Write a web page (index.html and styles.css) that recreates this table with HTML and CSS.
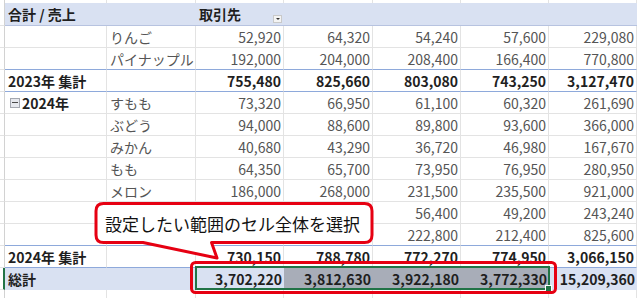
FILE: index.html
```html
<!DOCTYPE html>
<html lang="ja">
<head>
<meta charset="utf-8">
<title>ピボットテーブル</title>
<link rel="stylesheet" href="styles.css">
</head>
<body>
<div class="sheet">
  <div class="row top"><div class="rh"></div><div></div><div></div><div></div><div></div><div></div><div></div><div></div></div>
  <div class="row head">
    <div class="rh"></div>
    <div>合計 / 売上</div>
    <div></div>
    <div class="hcell">取引先<span class="filter"></span></div>
    <div></div><div></div><div></div><div></div>
  </div>
  <div class="row"><div class="rh"></div><div></div><div>りんご</div><div class="n">52,920</div><div class="n">64,320</div><div class="n">54,240</div><div class="n">57,600</div><div class="n">229,080</div></div>
  <div class="row blue"><div class="rh"></div><div></div><div>パイナップル</div><div class="n">192,000</div><div class="n">204,000</div><div class="n">208,400</div><div class="n">166,400</div><div class="n">770,800</div></div>
  <div class="row blue bold"><div class="rh"></div><div>2023年 集計</div><div></div><div class="n">755,480</div><div class="n">825,660</div><div class="n">803,080</div><div class="n">743,250</div><div class="n">3,127,470</div></div>
  <div class="row"><div class="rh"></div><div class="grp"><span class="collapse"></span>2024年</div><div>すもも</div><div class="n">73,320</div><div class="n">66,950</div><div class="n">61,100</div><div class="n">60,320</div><div class="n">261,690</div></div>
  <div class="row"><div class="rh"></div><div></div><div>ぶどう</div><div class="n">94,000</div><div class="n">88,600</div><div class="n">89,800</div><div class="n">93,600</div><div class="n">366,000</div></div>
  <div class="row"><div class="rh"></div><div></div><div>みかん</div><div class="n">40,680</div><div class="n">43,290</div><div class="n">36,720</div><div class="n">46,980</div><div class="n">167,670</div></div>
  <div class="row"><div class="rh"></div><div></div><div>もも</div><div class="n">64,350</div><div class="n">65,700</div><div class="n">73,950</div><div class="n">76,950</div><div class="n">280,950</div></div>
  <div class="row"><div class="rh"></div><div></div><div>メロン</div><div class="n">186,000</div><div class="n">268,000</div><div class="n">231,500</div><div class="n">235,500</div><div class="n">921,000</div></div>
  <div class="row"><div class="rh"></div><div></div><div></div><div class="n"></div><div class="n"></div><div class="n">56,400</div><div class="n">49,200</div><div class="n">243,240</div></div>
  <div class="row blue"><div class="rh"></div><div></div><div></div><div class="n"></div><div class="n"></div><div class="n">222,800</div><div class="n">212,400</div><div class="n">825,600</div></div>
  <div class="row blue bold"><div class="rh"></div><div>2024年 集計</div><div></div><div class="n">730,150</div><div class="n">788,780</div><div class="n">772,270</div><div class="n">774,950</div><div class="n">3,066,150</div></div>
  <div class="row total"><div class="rh"></div><div>総計</div><div></div><div class="n">3,702,220</div><div class="n sel">3,812,630</div><div class="n sel">3,922,180</div><div class="n sel">3,772,330</div><div class="n">15,209,360</div></div>
  <div class="row bottom"><div class="rh"></div><div></div><div></div><div></div><div></div><div></div><div></div><div></div></div>
</div>

<div class="selection"><span class="handle"></span></div>

<svg class="overlay" width="640" height="298" viewBox="0 0 640 298" aria-hidden="true">
  <rect x="191.5" y="262.5" width="364" height="30" rx="4" ry="4" fill="none" stroke="#e60012" stroke-width="3"/>
  <path d="M103.5 203.5 H364.5 Q372 203.5 372 211 V235 Q372 242.5 364.5 242.5 H211.5 L217 258 L143 242.5 H103.5 Q96 242.5 96 235 V211 Q96 203.5 103.5 203.5 Z" fill="#fff" stroke="#e60012" stroke-width="3" stroke-linejoin="round"/>
</svg>
<div class="callout-text">設定したい範囲のセル全体を選択</div>
</body>
</html>
```

FILE: styles.css
```css
html, body {
  margin: 0;
  padding: 0;
}
body {
  width: 640px;
  height: 298px;
  overflow: hidden;
  background: #ffffff;
  position: relative;
  font-family: "Noto Sans CJK JP", "Noto Sans", sans-serif;
  font-size: 14px;
}
.sheet {
  width: 637px;
}
.row {
  display: grid;
  grid-template-columns: 5px 102px 89px 88px 89px 88px 88px 88px;
  height: 22px;
}
.row > div {
  box-sizing: border-box;
  border-right: 1px solid #e3e3e3;
  border-bottom: 1px solid #e3e3e3;
  display: flex;
  align-items: center;
  padding: 0 2px 0 3px;
  white-space: nowrap;
  overflow: hidden;
  color: #555555;
  line-height: 1;
}
.row > .rh {
  padding: 0;
  border-right-color: #d2d2d2;
}
.row > .n {
  justify-content: flex-end;
}
.top {
  height: 3px;
}
.top > div {
  border-bottom: none !important;
}
.head {
  height: 23px;
}
.head > div {
  background: #d9e1f2;
  border-right: none !important;
  border-bottom-color: #b7c3e0 !important;
  color: #1f1f1f;
  font-weight: bold;
}
.head > .rh {
  background: #ffffff;
  border-right: 1px solid #d2d2d2 !important;
  border-bottom-color: #e3e3e3 !important;
}
.hcell {
  position: relative;
}
.filter {
  margin-left: auto;
  align-self: flex-end;
  margin-bottom: 2px;
  width: 9px;
  height: 8px;
  box-sizing: border-box;
  border: 1px solid #c9c9c9;
  background: #f4f4f4;
  display: flex;
  align-items: center;
  justify-content: center;
}
.filter::after {
  content: "";
  width: 0;
  height: 0;
  border-left: 2px solid transparent;
  border-right: 2px solid transparent;
  border-top: 2px solid #333333;
}
.blue > div {
  border-bottom-color: #8ea9db;
}
.blue > .rh {
  border-bottom-color: #e3e3e3;
}
.bold > div {
  font-weight: bold;
  color: #1f1f1f;
}
.grp {
  font-weight: bold;
  color: #1f1f1f !important;
}
.collapse {
  width: 10px;
  height: 10px;
  box-sizing: border-box;
  border: 1px solid #a3a7b0;
  background: #e6e8ee;
  margin: 0 2px 0 2px;
  display: flex;
  align-items: center;
  justify-content: center;
  flex: none;
}
.collapse::after {
  content: "";
  width: 6px;
  height: 1px;
  background: #4a4a4a;
}
.total > div {
  background: #d9e1f2;
  border-right: none;
  border-bottom-color: #d9e1f2;
  font-weight: bold;
  color: #1f1f1f;
}
.total > .rh {
  background: #ffffff;
  border-right: 2px solid #217346;
  border-bottom-color: #e3e3e3;
}
.total > .sel {
  background: #a8adb8;
}
.bottom {
  height: 9px;
}
.bottom > div {
  border-bottom: none;
}
.selection {
  position: absolute;
  left: 195px;
  top: 266px;
  width: 355px;
  height: 24px;
  box-sizing: border-box;
  border: 2px solid #217346;
}
.handle {
  position: absolute;
  right: -4px;
  bottom: -4px;
  width: 5px;
  height: 5px;
  background: #217346;
  border: 1px solid #ffffff;
}
.overlay {
  position: absolute;
  left: 0;
  top: 0;
  pointer-events: none;
}
.callout-text {
  position: absolute;
  left: 96px;
  top: 203px;
  width: 276px;
  height: 40px;
  box-sizing: border-box;
  padding-left: 9px;
  display: flex;
  align-items: center;
  font-family: "Noto Sans CJK JP", "Noto Sans", sans-serif;
  font-size: 17px;
  color: #111111;
  white-space: nowrap;
  line-height: 1;
}
```
